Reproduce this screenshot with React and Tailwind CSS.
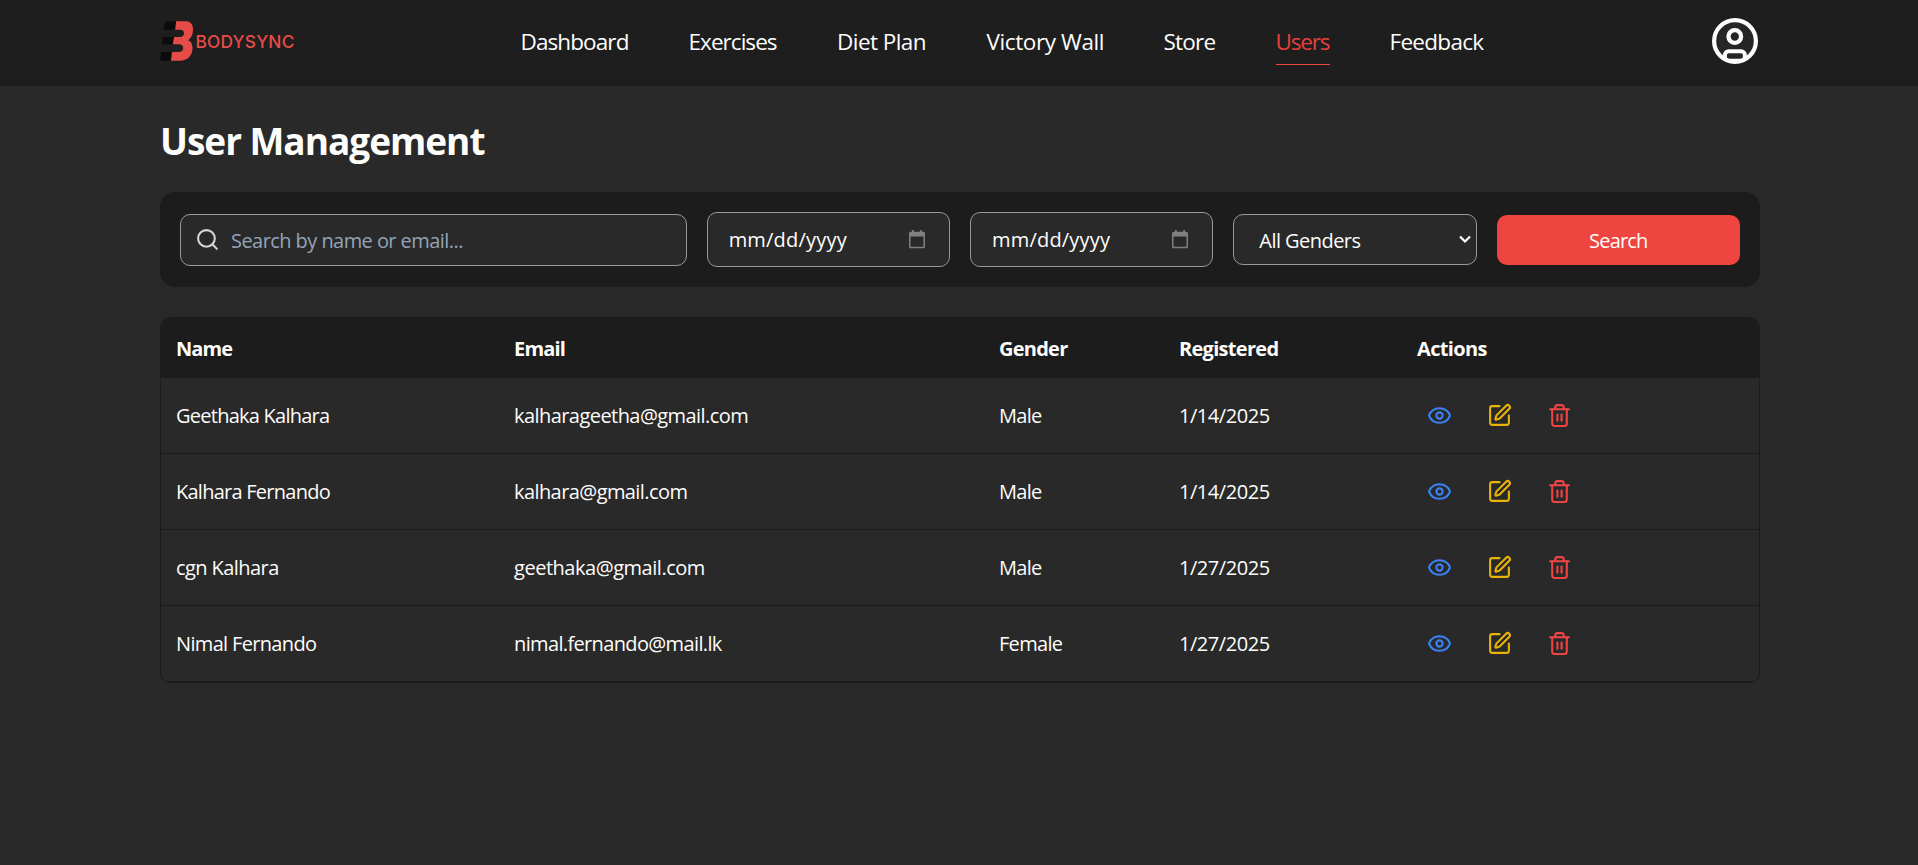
import { Eye, Search, SquarePen, Trash2 } from 'lucide-react';

const nav = [
  { label: 'Dashboard', size: 'w-[108px] tracking-[-0.9px]' },
  { label: 'Exercises', size: 'w-[88.5px] tracking-[-0.95px]' },
  { label: 'Diet Plan', size: 'w-[89.5px] tracking-[-0.55px]' },
  { label: 'Victory Wall', size: 'w-[117px] tracking-[-0.4px]' },
  { label: 'Store', size: 'w-[52px] tracking-[-0.8px]' },
  { label: 'Users', size: 'w-[54px] tracking-[-1.2px]', active: true },
  { label: 'Feedback', size: 'w-[95px] tracking-[-0.7px]' },
];

const columns = [
  { label: 'Name', tracking: 'tracking-[-0.95px]' },
  { label: 'Email', tracking: 'tracking-[-0.8px]' },
  { label: 'Gender', tracking: 'tracking-[-0.75px]' },
  { label: 'Registered', tracking: 'tracking-[-0.7px]' },
  { label: 'Actions', tracking: 'tracking-[-0.65px]' },
];

const users = [
  { name: 'Geethaka Kalhara', email: 'kalharageetha@gmail.com', gender: 'Male', registered: '1/14/2025', nameFit: 'tracking-[-0.75px]', emailFit: 'tracking-[-0.56px]' },
  { name: 'Kalhara Fernando', email: 'kalhara@gmail.com', gender: 'Male', registered: '1/14/2025', nameFit: 'tracking-[-0.75px]', emailFit: 'tracking-[-0.58px]' },
  { name: 'cgn Kalhara', email: 'geethaka@gmail.com', gender: 'Male', registered: '1/27/2025', nameFit: 'tracking-[-0.57px]', emailFit: 'tracking-[-0.47px]' },
  { name: 'Nimal Fernando', email: 'nimal.fernando@mail.lk', gender: 'Female', registered: '1/27/2025', nameFit: 'tracking-[-0.66px]', emailFit: 'tracking-[-0.64px]' },
];

function Logo() {
  return (
    <div className="flex h-[86px] w-[360.5px] items-center">
      <svg width="34" height="42" viewBox="0 0 34 42" className="mt-[-4px] shrink-0">
        <path d="M5 1.5h11.2l-1.4 8.3H3.5z" fill="#0b0b0b" />
        <path d="M3 17h11.100l-1.300 7.200H1.700z" fill="#0b0b0b" />
        <path d="M1.300 32h10.900l-1.200 8.800H0z" fill="#0b0b0b" />
        <path
          d="M16.200 1.300H26C30.500 1.300 33 4.500 33 9C33 14 31.500 18 28 20.200C31.500 21.500 32.500 24.500 32.500 28C32.500 35.500 27.500 40.800 20 40.800H11L12 32H18.500C21.500 32 23.200 30.500 23.200 28C23.200 25.500 21.500 24.200 19 24.200H12.800L14.100 17H19.500C22.500 17 24 15.500 24 13.300C24 11 22.700 9.800 20.500 9.800H15.200Z"
          fill="#e64c47"
        />
      </svg>
      <span className="mt-[-3px] ml-[1.5px] font-['Inter'] text-[17.300px] font-medium tracking-[0.2px] text-[#e64c47]">BODYSYNC</span>
    </div>
  );
}

function Avatar() {
  return (
    <svg width="46" height="46" viewBox="0 0 46 46" fill="none" stroke="#fdfdfb" className="mt-[-4px] mr-[2px] shrink-0">
      <clipPath id="avatar-disc">
        <circle cx="23" cy="23" r="22.500" />
      </clipPath>
      <circle cx="23" cy="23" r="20.900" strokeWidth="4.200" fill="#262626" />
      <circle cx="22.800" cy="18.500" r="6.300" strokeWidth="4.300" />
      <rect x="12.900" y="33.200" width="20" height="9.500" rx="3.800" strokeWidth="4" clipPath="url(#avatar-disc)" />
    </svg>
  );
}

function DateField() {
  return (
    <div className="flex h-[55px] items-center justify-between rounded-[10px] border border-[#999] bg-[#292929] pr-[24px] pl-[21px]">
      <span className="tracking-[0.2px]">mm/dd/yyyy</span>
      <svg width="16" height="19" viewBox="0 0 16 19">
        <path
          fill="#808080"
          fillRule="evenodd"
          d="M3 0h1.800v1.800h6.400V0H13v1.800h1.500A1.500 1.500 0 0 1 16 3.300v13.400a1.500 1.500 0 0 1-1.500 1.500h-13A1.500 1.500 0 0 1 0 16.700V3.300a1.500 1.500 0 0 1 1.500-1.500H3zM1.500 6.400v10.300h13V6.400z"
        />
      </svg>
    </div>
  );
}

export default function App() {
  return (
    <div className="h-[865px] overflow-hidden bg-[#292929] font-['Open_Sans','Noto_Sans',sans-serif] text-[20px] leading-[30px] whitespace-nowrap text-[#fdfdfb]">
      <header className="flex h-[86px] items-center justify-between bg-[#1e1e1e] pr-[158px] pl-[160px]">
        <div className="flex items-center">
          <Logo />
          <nav className="flex gap-[60px] text-[22.500px]">
            {nav.map((item) => (
              <a
                key={item.label}
                className={`${item.size} ${item.active ? 'border-b border-[#ef4444] text-[#e5403c]' : 'border-b border-transparent'} mt-[-1px] h-[45px] leading-[44px]`}
              >
                {item.label}
              </a>
            ))}
          </nav>
        </div>
        <Avatar />
      </header>

      <main className="ml-[160px] w-[1600px]">
        <h1 className="pt-[32px] text-[37px] leading-[45px] font-bold tracking-[-1.030px]">User Management</h1>

        <section className="mt-[29px] grid h-[95px] grid-cols-6 items-center gap-[20px] rounded-[15px] bg-[#1c1c1c] px-[20px]">
          <div className="col-span-2 flex h-[52px] items-center rounded-[10px] border border-[#999] bg-[#292929] pl-[14px]">
            <Search size={25} color="#d6d6d2" />
            <span className="mt-[2px] ml-[11px] tracking-[-0.560px] text-[#94a3b8]">Search by name or email...</span>
          </div>
          <DateField />
          <DateField />
          <div className="flex h-[51px] items-center justify-between rounded-[10px] border border-[#999] bg-[#292929] pr-[5px] pl-[25px]">
            <span className="mt-[2px] tracking-[-0.550px]">All Genders</span>
            <svg width="12" height="9" viewBox="0 0 12 9" fill="none">
              <path d="M1 1.500l5 5l5-5" stroke="#fff" strokeWidth="2.200" />
            </svg>
          </div>
          <button className="h-[50px] rounded-[10px] bg-[#ef4540] pt-[2px] tracking-[-0.800px]">Search</button>
        </section>

        <div className="mt-[30px] overflow-hidden rounded-[10px] border border-[#1c1c1c]">
          <table className="w-full table-fixed border-separate border-spacing-0 text-left">
            <colgroup>
              <col className="w-[338px]" />
              <col className="w-[485px]" />
              <col className="w-[180px]" />
              <col className="w-[238px]" />
              <col />
            </colgroup>
            <thead className="bg-[#1c1c1c]">
              <tr>
                {columns.map((c) => (
                  <th key={c.label} className={`${c.tracking} h-[60px] px-[15px] pt-[2px] font-bold`}>{c.label}</th>
                ))}
              </tr>
            </thead>
            <tbody>
              {users.map((u) => (
                <tr key={u.email}>
                  <td className={`${u.nameFit} border-b border-[#1c1c1c] px-[15px]`}>{u.name}</td>
                  <td className={`${u.emailFit} border-b border-[#1c1c1c] px-[15px]`}>{u.email}</td>
                  <td className="border-b border-[#1c1c1c] px-[15px] tracking-[-0.700px]">{u.gender}</td>
                  <td className="border-b border-[#1c1c1c] px-[15px] tracking-[-0.450px]">{u.registered}</td>
                  <td className="h-[76px] border-b border-[#1c1c1c] px-[15px]">
                    <div className="flex gap-[15px]">
                      <button className="p-[10px] text-[#3b82f6]"><Eye size={25} /></button>
                      <button className="p-[10px] text-[#eab308]"><SquarePen size={25} /></button>
                      <button className="p-[10px] text-[#ef4444]"><Trash2 size={25} /></button>
                    </div>
                  </td>
                </tr>
              ))}
            </tbody>
          </table>
        </div>
      </main>
    </div>
  );
}
